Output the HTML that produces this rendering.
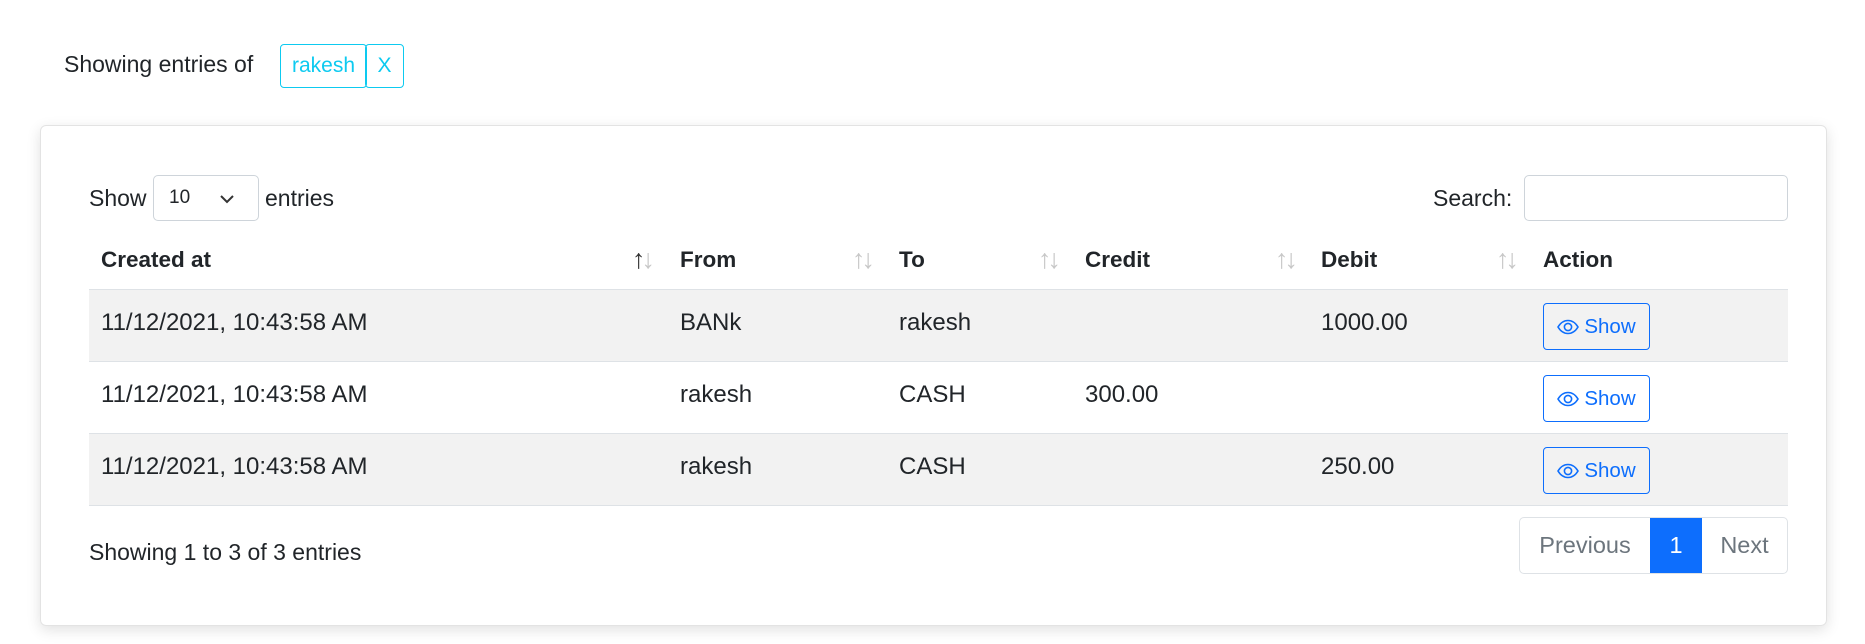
<!DOCTYPE html>
<html><head><meta charset="utf-8"><style>
*{box-sizing:border-box;margin:0;padding:0}
body{width:1865px;height:644px;background:#fff;font-family:"Liberation Sans",Arial,sans-serif;color:#212529;font-size:19px;position:relative;overflow:hidden}
.abs{position:absolute}
.tag{position:absolute;top:44px;height:44px;border:1px solid #0dcaf0;color:#0dcaf0;border-radius:4px;display:flex;align-items:center;justify-content:center;font-size:21px}
.card{position:absolute;left:40px;top:125px;width:1787px;height:501px;border:1px solid #e3e3e3;border-radius:6px;box-shadow:0 4px 14px rgba(0,0,0,.12)}
.th{position:absolute;top:247px;font-weight:bold;font-size:22.5px}
.sort{position:absolute;top:244px;font-size:27px;color:#c8c8c8;letter-spacing:-4px;font-weight:300}
.row{position:absolute;left:89px;width:1699px;height:72px;border-bottom:1px solid #dee2e6}
.cell{position:absolute;top:19px;font-size:24px}
.btn{position:absolute;left:1454px;top:13px;width:107px;height:47px;border:1px solid #0d6efd;border-radius:4px;color:#0d6efd;display:flex;align-items:center;justify-content:center;font-size:20.5px;gap:5px}
</style></head><body>
<div class="abs" style="left:64px;top:51px;font-size:23px">Showing entries of</div>
<div class="tag" style="left:280px;width:87px">rakesh</div>
<div class="tag" style="left:365px;width:39px">X</div>
<div class="card"></div>
<div class="abs" style="left:89px;top:185px;font-size:23px">Show</div>
<div class="abs" style="left:153px;top:175px;width:106px;height:46px;border:1px solid #ced4da;border-radius:5px"><span style="position:absolute;left:15px;top:11px;font-size:19px">10</span>
<svg style="position:absolute;left:65px;top:17px" width="16" height="12" viewBox="0 0 16 12"><path d="M2 3l6 6 6-6" stroke="#333" stroke-width="2" fill="none"/></svg></div>
<div class="abs" style="left:265px;top:185px;font-size:23px">entries</div>
<div class="abs" style="left:1433px;top:185px;font-size:23px">Search:</div>
<div class="abs" style="left:1524px;top:175px;width:264px;height:46px;border:1px solid #ced4da;border-radius:5px"></div>
<div class="th" style="left:101px">Created at</div>
<div class="th" style="left:680px">From</div>
<div class="th" style="left:899px">To</div>
<div class="th" style="left:1085px">Credit</div>
<div class="th" style="left:1321px">Debit</div>
<div class="th" style="left:1543px">Action</div>
<div class="sort" style="left:632px"><span style="color:#333">↑</span>↓</div>
<div class="sort" style="left:852px">↑↓</div>
<div class="sort" style="left:1038px">↑↓</div>
<div class="sort" style="left:1275px">↑↓</div>
<div class="sort" style="left:1496px">↑↓</div>
<div class="abs" style="left:89px;top:289px;width:1699px;border-top:2px solid #dee2e6"></div>
<div class="row" style="top:290px;background:#f2f2f2"><div class="cell" style="left:12px">11/12/2021, 10:43:58 AM</div><div class="cell" style="left:591px">BANk</div><div class="cell" style="left:810px">rakesh</div><div class="cell" style="left:1232px">1000.00</div><div class="btn"><svg width="22" height="16" viewBox="0 0 22 16"><path d="M1 8C4 3 7.5 1.5 11 1.5S18 3 21 8C18 13 14.5 14.5 11 14.5S4 13 1 8Z" stroke="#0d6efd" stroke-width="1.6" fill="none"/><circle cx="11" cy="8" r="3.6" stroke="#0d6efd" stroke-width="1.6" fill="none"/></svg>Show</div></div>
<div class="row" style="top:362px"><div class="cell" style="left:12px">11/12/2021, 10:43:58 AM</div><div class="cell" style="left:591px">rakesh</div><div class="cell" style="left:810px">CASH</div><div class="cell" style="left:996px">300.00</div><div class="btn"><svg width="22" height="16" viewBox="0 0 22 16"><path d="M1 8C4 3 7.5 1.5 11 1.5S18 3 21 8C18 13 14.5 14.5 11 14.5S4 13 1 8Z" stroke="#0d6efd" stroke-width="1.6" fill="none"/><circle cx="11" cy="8" r="3.6" stroke="#0d6efd" stroke-width="1.6" fill="none"/></svg>Show</div></div>
<div class="row" style="top:434px;background:#f2f2f2"><div class="cell" style="left:12px">11/12/2021, 10:43:58 AM</div><div class="cell" style="left:591px">rakesh</div><div class="cell" style="left:810px">CASH</div><div class="cell" style="left:1232px">250.00</div><div class="btn"><svg width="22" height="16" viewBox="0 0 22 16"><path d="M1 8C4 3 7.5 1.5 11 1.5S18 3 21 8C18 13 14.5 14.5 11 14.5S4 13 1 8Z" stroke="#0d6efd" stroke-width="1.6" fill="none"/><circle cx="11" cy="8" r="3.6" stroke="#0d6efd" stroke-width="1.6" fill="none"/></svg>Show</div></div>
<div class="abs" style="left:89px;top:539px;font-size:23px">Showing 1 to 3 of 3 entries</div>
<div class="abs" style="left:1519px;top:517px;width:269px;height:57px;border:1px solid #dee2e6;border-radius:5px;display:flex;font-size:23.5px;color:#6c757d;overflow:hidden">
<div style="width:130px;display:flex;align-items:center;justify-content:center">Previous</div>
<div style="width:52px;background:#0d6efd;color:#fff;display:flex;align-items:center;justify-content:center">1</div>
<div style="flex:1;display:flex;align-items:center;justify-content:center">Next</div></div>
</body></html>
